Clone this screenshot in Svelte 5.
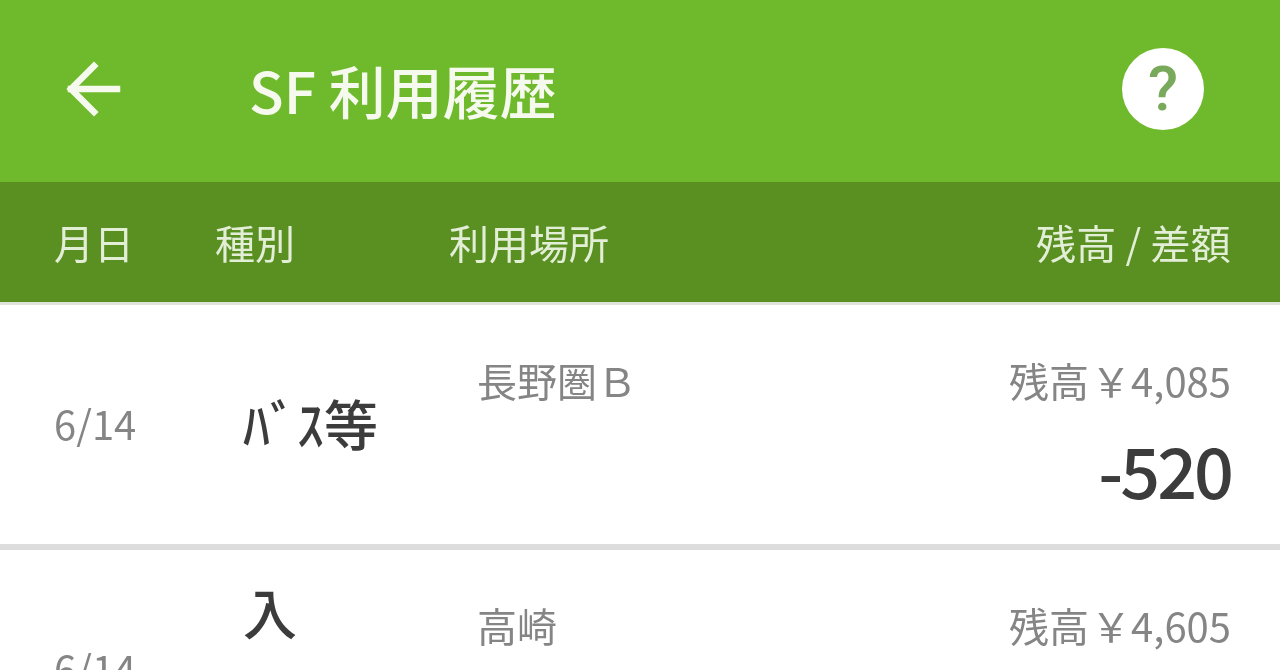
<script lang="ts">
	type Row = {
		date: string
		kind: string
		place: string
		balance: string
		diff?: string
		topKind?: boolean
	}

	const rows: Row[] = [
		{ date: "6/14", kind: "ﾊﾞｽ等", place: "長野圏Ｂ", balance: "4,085", diff: "-520" },
		{ date: "6/14", kind: "入", place: "高崎", balance: "4,605", topKind: true },
	]
</script>

<div class="page">
	<header class="appbar">
		<button class="back" aria-label="戻る">
			<svg width="58" height="58" viewBox="0 0 58 58" fill="none" stroke="currentColor" stroke-width="6.5" stroke-linecap="square">
				<path d="M6 29H52" />
				<path d="M29 6L6 29L29 52" />
			</svg>
		</button>
		<h1>SF 利用履歴</h1>
		<button class="help">?</button>
	</header>

	<div class="columns">
		<span class="c-date">月日</span>
		<span class="c-kind">種別</span>
		<span class="c-place">利用場所</span>
		<span class="c-amount">残高 / 差額</span>
	</div>

	{#each rows as row}
		<div class="row">
			<span class="date">{row.date}</span>
			<span class="kind" class:top={row.topKind}>{row.kind}</span>
			<span class="place">{row.place}</span>
			<div class="amount">
				<span class="balance">残高<span class="yen">￥</span>{row.balance}</span>
				{#if row.diff}
					<span class="diff">{row.diff}</span>
				{/if}
			</div>
		</div>
	{/each}
</div>

<style>
	:global(body) {
		margin: 0;
		background: #fff;
		overflow: hidden;
	}

	.page {
		height: 670px;
		overflow: hidden;
		font-family: "Noto Sans CJK JP", "Noto Sans", sans-serif;
		filter: blur(0.4px);
	}

	.appbar {
		height: 182px;
		box-sizing: border-box;
		padding: 0 76px 4px 65px;
		display: flex;
		align-items: center;
		background: #6fba2c;
		color: #f6faee;
	}

	.back {
		width: 58px;
		height: 58px;
		padding: 0;
		border: 0;
		background: none;
		color: inherit;
		display: flex;
	}

	h1 {
		margin: 0 0 0 126px;
		flex: 1;
		font-size: 57px;
		font-weight: 500;
		line-height: 70px;
	}

	.help {
		width: 82px;
		height: 82px;
		padding: 0;
		border: 0;
		border-radius: 50%;
		background: #fff;
		color: #79a95a;
		font: 500 62px/82px Roboto, sans-serif;
	}

	.columns {
		height: 120px;
		padding: 0 49px 0 54px;
		display: grid;
		grid-template-columns: 161px 234px 1fr auto;
		align-items: center;
		background: #5a9022;
		color: #e3eed6;
		font-size: 40px;
		box-shadow: 0 3px 0 #dfe3da;
	}

	.c-amount {
		letter-spacing: 0.2px;
	}

	.row {
		height: 239px;
		padding: 0 49px 0 54px;
		display: grid;
		grid-template-columns: 189px 234px 1fr auto;
		border-bottom: 6px solid #ddd;
		margin-top: 3px;
		margin-bottom: -3px;
	}

	.date {
		align-self: center;
		margin-top: -4px;
		color: #858585;
		font-size: 40px;
	}

	.kind {
		align-self: center;
		margin-top: -4px;
		color: #3c3c3c;
		font-size: 54px;
		font-weight: 500;
	}

	.kind.top {
		align-self: start;
		margin-top: 22px;
	}

	.place {
		padding-top: 46px;
		color: #858585;
		font-size: 40px;
		line-height: 58px;
	}

	.amount {
		padding-top: 46px;
		display: flex;
		flex-direction: column;
		align-items: flex-end;
	}

	.balance {
		color: #858585;
		font-size: 40px;
		line-height: 58px;
	}

	.yen {
		margin-left: 2px;
	}

	.diff {
		margin-top: 20px;
		color: #3c3c3c;
		font-size: 70px;
		font-weight: 500;
		line-height: 80px;
		letter-spacing: -3px;
	}
</style>
